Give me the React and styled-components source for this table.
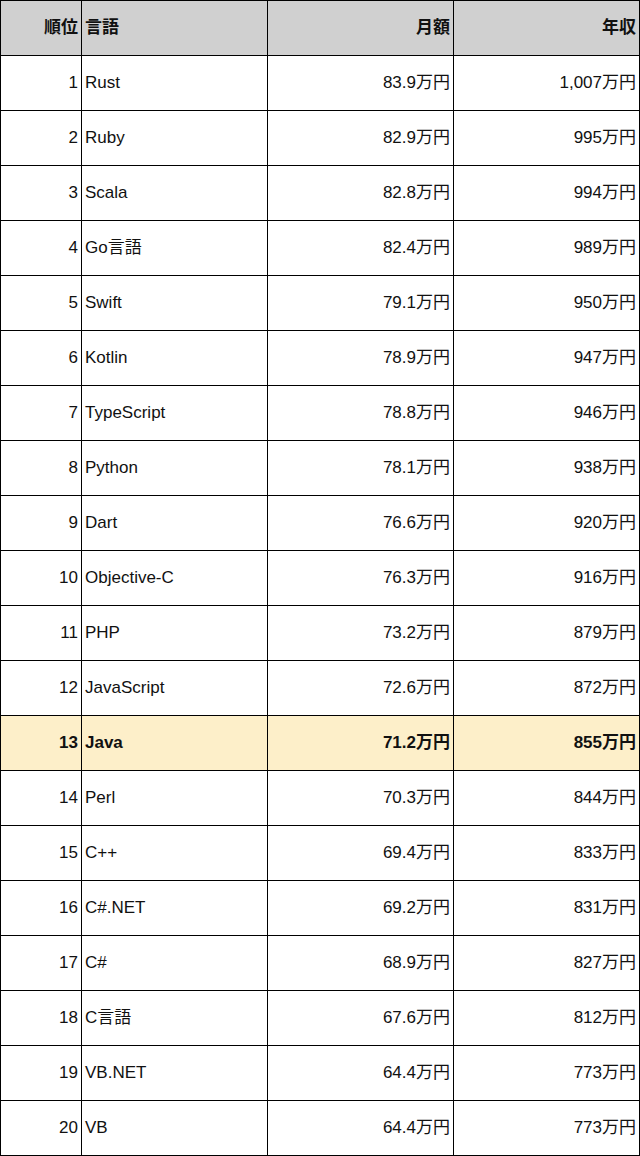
import React from 'react';
import styled, { createGlobalStyle } from 'styled-components';

const GlobalStyle = createGlobalStyle`
    body {
        margin: 0;
        background: #ffffff;
        font-family: "Liberation Sans", Arial, "Noto Sans CJK JP", sans-serif;
    }
`;

const Table = styled.div`
    display: grid;
    grid-template-columns: 80px 185px 185px 185px;
    grid-auto-rows: 54px;
    gap: 1px;
    padding: 1px;
    width: 640px;
    box-sizing: border-box;
    background: #000000;
`;

const Cell = styled.div`
    display: flex;
    align-items: center;
    justify-content: ${(p) => (p.left ? 'flex-start' : 'flex-end')};
    padding: ${(p) => (p.left ? '0 0 1px 3px' : '0 3px 1px 0')};
    background: ${(p) => (p.head ? '#d0d0d0' : p.mark ? '#fdefc9' : '#ffffff')};
    font-weight: ${(p) => (p.head || p.mark ? 'bold' : 'normal')};
    font-size: 17px;
    line-height: 20px;
    color: #111111;
    white-space: nowrap;
`;

const rows = [
    ['Rust', '83.9', '1,007'],
    ['Ruby', '82.9', '995'],
    ['Scala', '82.8', '994'],
    ['Go言語', '82.4', '989'],
    ['Swift', '79.1', '950'],
    ['Kotlin', '78.9', '947'],
    ['TypeScript', '78.8', '946'],
    ['Python', '78.1', '938'],
    ['Dart', '76.6', '920'],
    ['Objective-C', '76.3', '916'],
    ['PHP', '73.2', '879'],
    ['JavaScript', '72.6', '872'],
    ['Java', '71.2', '855'],
    ['Perl', '70.3', '844'],
    ['C++', '69.4', '833'],
    ['C#.NET', '69.2', '831'],
    ['C#', '68.9', '827'],
    ['C言語', '67.6', '812'],
    ['VB.NET', '64.4', '773'],
    ['VB', '64.4', '773'],
];

const App = () => {
    return (
        <>
            <GlobalStyle />
            <Table>
                <Cell head>順位</Cell>
                <Cell head left>言語</Cell>
                <Cell head>月額</Cell>
                <Cell head>年収</Cell>
                {rows.map((r, i) => {
                    const mark = r[0] === 'Java';
                    return (
                        <React.Fragment key={i}>
                            <Cell mark={mark}>{i + 1}</Cell>
                            <Cell mark={mark} left>{r[0]}</Cell>
                            <Cell mark={mark}>{r[1]}万円</Cell>
                            <Cell mark={mark}>{r[2]}万円</Cell>
                        </React.Fragment>
                    );
                })}
            </Table>
        </>
    );
};

export default App;
